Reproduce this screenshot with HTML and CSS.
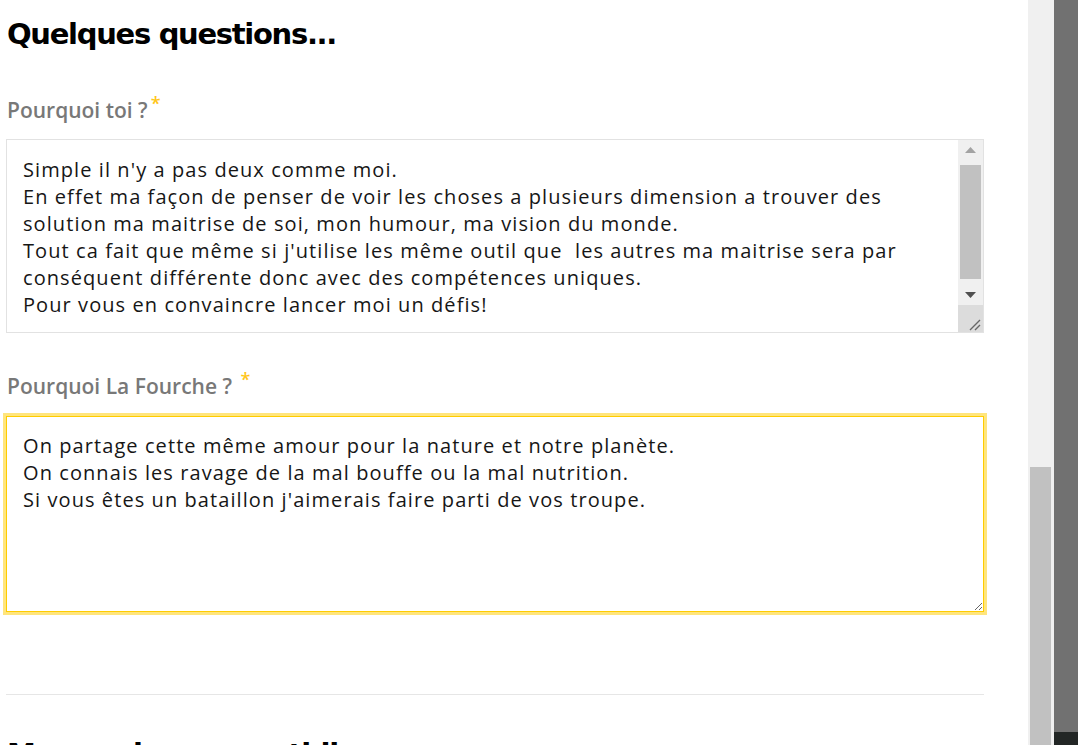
FILE: index.html
```html
<!DOCTYPE html>
<html lang="fr">
<head>
<meta charset="utf-8">
<title>Quelques questions...</title>
<link rel="stylesheet" href="styles.css">
</head>
<body>
<div class="page">
  <main class="main">
    <h2 class="section-title">Quelques questions...</h2>

    <div class="field">
      <label class="field-label" for="q1">Pourquoi toi ?<span class="req">*</span></label>
      <div class="ta-box">
        <textarea id="q1" class="ta ta-scroll" readonly>Simple il n'y a pas deux comme moi.
En effet ma façon de penser de voir les choses a plusieurs dimension a trouver des solution ma maitrise de soi, mon humour, ma vision du monde.
Tout ca fait que même si j'utilise les même outil que  les autres ma maitrise sera par conséquent différente donc avec des compétences uniques.
Pour vous en convaincre lancer moi un défis!</textarea>
        <div class="sb">
          <div class="sb-btn"><svg width="11" height="6" viewBox="0 0 11 6"><path d="M0 6 L5.5 0 L11 6 Z" fill="#a3a3a3"/></svg></div>
          <div class="sb-track"><div class="sb-thumb"></div></div>
          <div class="sb-btn"><svg width="11" height="6" viewBox="0 0 11 6"><path d="M0 0 L11 0 L5.5 6 Z" fill="#505050"/></svg></div>
          <div class="sb-corner"><svg width="12" height="12" viewBox="0 0 12 12"><path d="M1 11 L11 1 M6 11 L11 6" stroke="#666" stroke-width="1.4" fill="none"/></svg></div>
        </div>
      </div>
    </div>

    <div class="field field-2">
      <label class="field-label" for="q2">Pourquoi La Fourche ? <span class="req">*</span></label>
      <div class="ta-focus">
        <textarea id="q2" class="ta ta-plain">On partage cette même amour pour la nature et notre planète.
On connais les ravage de la mal bouffe ou la mal nutrition.
Si vous êtes un bataillon j'aimerais faire parti de vos troupe.</textarea>
      </div>
    </div>

    <hr class="sep">

    <h2 class="section-title">Mes envies au quotidien</h2>
  </main>
  <div class="page-sb"><div class="page-thumb"></div></div>
  <aside class="side"><div class="side-foot"></div></aside>
</div>
</body>
</html>
```

FILE: styles.css
```css
html, body {
  margin: 0;
  padding: 0;
  height: 100%;
  overflow: hidden;
  background: #ffffff;
}

.page {
  display: flex;
  height: 745px;
  overflow: hidden;
}

.main {
  width: 978px;
  padding: 0 44px 0 6px;
  overflow: hidden;
  flex: none;
}

.section-title {
  margin: 14px 0 0 1px;
  font-family: "DejaVu Sans", sans-serif;
  font-weight: 700;
  font-size: 29px;
  line-height: 40px;
  color: #000;
  letter-spacing: -1.3px;
}

.field {
  margin-top: 36px;
}

.field-2 {
  margin-top: 33px;
}

.field-label {
  display: block;
  margin-left: 1px;
  font-family: "Open Sans", sans-serif;
  font-weight: 600;
  font-size: 21px;
  line-height: 26px;
  color: #787878;
}

.req {
  color: #ffc61a;
  font-size: 18px;
  vertical-align: 8px;
  margin-left: 3px;
}

.ta-box {
  margin-top: 16px;
  display: flex;
  height: 192px;
  border: 1px solid #e2e2e2;
  background: #fff;
}

.ta {
  display: block;
  box-sizing: border-box;
  border: 0;
  outline: none;
  margin: 0;
  font-family: "Open Sans", sans-serif;
  font-size: 20px;
  letter-spacing: 1.08px;
  line-height: 27px;
  color: #161616;
  background: #fff;
}

.ta-scroll {
  flex: 1;
  height: 100%;
  padding: 16px 20px 0 16px;
  overflow: hidden;
  resize: none;
}

.sb {
  width: 25px;
  display: flex;
  flex-direction: column;
  background: #f0f0f0;
}

.sb-btn {
  height: 20px;
  display: flex;
  align-items: center;
  justify-content: center;
}

.sb-track {
  flex: 1;
  padding: 5px 2px 6px 2px;
  display: flex;
}

.sb-thumb {
  flex: 1;
  background: #c1c1c1;
}

.sb-corner {
  height: 26px;
  background: #dcdcdc;
  display: flex;
  align-items: flex-end;
  justify-content: flex-end;
  padding: 0 2px 1px 0;
}

.ta-focus {
  margin-top: 17px;
  margin-left: 0;
  border: 1px solid #ffcc00;
  box-shadow: 0 0 0 3px #ffe57d;
  height: 194px;
}

.ta-plain {
  width: 100%;
  height: 100%;
  padding: 15px 16px 0 16px;
  resize: vertical;
  overflow: hidden;
}

.sep {
  margin: 82px 0 0 0;
  border: 0;
  border-top: 1px solid #e6e6e6;
  height: 0;
}

.sep + .section-title {
  margin-top: 39px;
}

.page-sb {
  width: 26px;
  flex: none;
  background: #f0f0f0;
  display: flex;
  flex-direction: column;
  padding: 467px 3px 0 2px;
  box-sizing: border-box;
}

.page-thumb {
  flex: 1;
  background: #c1c1c1;
}

.side {
  flex: 1;
  background: #717171;
  display: flex;
  flex-direction: column;
  justify-content: flex-end;
}

.side-foot {
  height: 13px;
  background: #222625;
}
```
